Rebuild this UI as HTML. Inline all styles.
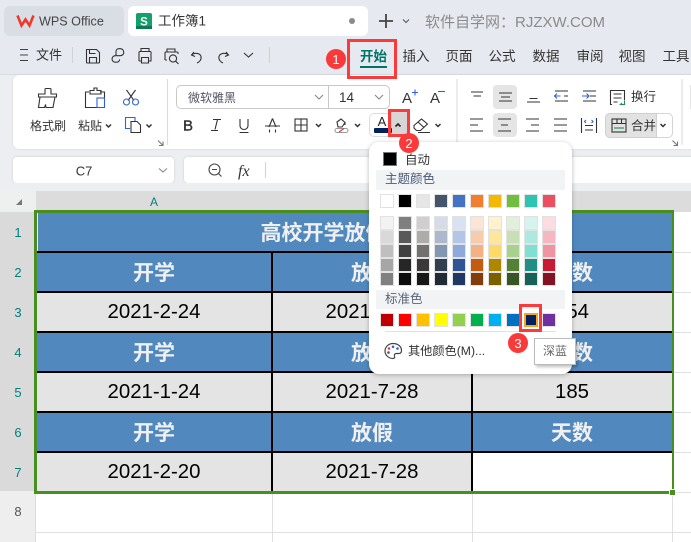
<!DOCTYPE html>
<html lang="zh"><head><meta charset="utf-8"><title>WPS</title>
<style>
html,body{margin:0;padding:0}
body{width:691px;height:542px;overflow:hidden;position:relative;background:#fff;font-family:"Liberation Sans","Noto Sans CJK SC",sans-serif}
div{box-sizing:border-box}
.a{position:absolute}
svg{position:absolute;left:0;top:0;overflow:visible}
svg text{font-family:"Liberation Sans","Noto Sans CJK SC",sans-serif}
.c{position:absolute;display:flex;align-items:center;justify-content:center;color:#000;font-size:20.400px;background:#e4e4e4;height:40px}
.h{background:#5189bf;color:#f0f0f0;font-weight:bold;font-size:21px}
.rh{position:absolute;left:0;width:35px;height:40px;background:#dadada;color:#00807a;font-size:13px;padding-left:1px;display:flex;align-items:center;justify-content:center}
.ln{position:absolute;background:#000}
.g{position:absolute;background:#e0e0e0}
.grid{position:absolute;display:grid;grid-template-columns:repeat(10,14px);column-gap:4px}
.grid div{height:14px;border:1px solid #e2e2e2}
.red{position:absolute;border:3px solid #fb3b3b}
.num{position:absolute;width:20px;height:20px;border-radius:50%;background:#f93a3a;color:#fff;font-size:13px;display:flex;align-items:center;justify-content:center}
</style></head><body>

<!-- chrome background -->
<div class="a" style="left:0;top:0;width:691px;height:75px;background:#e6eaf0"></div>
<div class="a" style="left:0;top:75px;width:691px;height:116px;background:#eceef1"></div>
<div class="a" style="left:0;top:74px;width:691px;height:1px;background:#d9dce0"></div>
<div class="a" style="left:4px;top:6px;width:120px;height:30px;border-radius:6px;background:#d9dee5"></div>
<div class="a" style="left:128px;top:6px;width:240px;height:30px;border-radius:6px;background:#fff"></div>
<div class="a" style="left:13px;top:75px;width:690px;height:74px;border-radius:6px;background:#fff;box-shadow:0 0 2px #cfd2d6"></div>
<div class="a" style="left:13px;top:157px;width:161px;height:26px;border-radius:4px;background:#fff;box-shadow:0 0 2px #c8cbd0"></div>
<div class="a" style="left:184px;top:157px;width:520px;height:26px;border-radius:4px;background:#fff;box-shadow:0 0 2px #c8cbd0"></div>
<div class="a" style="left:493px;top:85px;width:24px;height:24px;border-radius:4px;background:#e5e5e5"></div>
<div class="a" style="left:493px;top:113px;width:24px;height:24px;border-radius:4px;background:#e5e5e5"></div>
<div class="a" style="left:605px;top:113px;width:68px;height:25px;border-radius:5px;border:1px solid #d5d5d5;background:#fff"></div>
<div class="a" style="left:605px;top:113px;width:52px;height:25px;border-radius:5px 0 0 5px;border:1px solid #cfcfcf;background:#e2e2e2"></div>
<div class="a" style="left:176px;top:85px;width:214px;height:24px;border-radius:5px;border:1px solid #c8c8c8;background:#fff"></div>
<div class="a" style="left:328px;top:85px;width:1px;height:24px;background:#c8c8c8"></div>
<div class="a" style="left:369px;top:113px;width:38px;height:24px;border-radius:5px;border:1px solid #ddd;background:#fff"></div>
<div class="a" style="left:390px;top:112px;width:17px;height:24px;background:#d6d6d6"></div>

<svg width="691" height="191" viewBox="0 0 691 191" fill="none" stroke="#333" stroke-width="1.100">
<!-- title row -->
<path d="M17.500 15.500l4 10 4-6 4 6 4-10" stroke="#ee3a2c" stroke-width="2.600"/>
<text x="39" y="25.500" font-size="12.600" fill="#444" stroke="none">WPS Office</text>
<rect x="136" y="13" width="16" height="16" rx="2" fill="#13a06a" stroke="none"/>
<rect x="136" y="26" width="16" height="3" fill="#0b7a50" stroke="none"/>
<text x="144" y="25.500" font-size="11.500" font-weight="bold" text-anchor="middle" fill="#fff" stroke="none">S</text>
<text x="158" y="25.500" font-size="13.500" fill="#333" stroke="none">工作簿1</text>
<circle cx="352" cy="21" r="3" fill="#8a8a8a" stroke="none"/>
<path d="M379 21h14M386 14v14" stroke="#444" stroke-width="1.800"/>
<path d="M403 19.500l3 3 3-3" stroke="#555"/>
<text x="425" y="27" font-size="15" fill="#8a8a8a" stroke="none">软件自学网：RJZXW.COM</text>

<!-- quick access -->
<path d="M20 49.500h8M20 55h8M20 60.500h8" stroke="#444"/>
<text x="36" y="59.500" font-size="13" fill="#333" stroke="none">文件</text>
<path d="M72.500 47v16M269.500 47v16" stroke="#cfd2d6"/>
<path d="M86.500 49.500h10l3 3v9.500a1 1 0 0 1-1 1h-11a1 1 0 0 1-1-1zM89.500 49.500v4h6M89.500 62.500v-5h7v5"/>
<path d="M116 55.500v-4a2.800 2.800 0 0 1 2.800-2.800h1.500a3.500 3.500 0 0 1 0 7h-5a2.800 2.800 0 0 0 0 6.500h1.500a2.800 2.800 0 0 0 2.800-2.800"/>
<path d="M141 52v-3.500h8V52M139 61v-8.500a1 1 0 0 1 1-1h10a1 1 0 0 1 1 1V61h-2.500M141.500 61H139M141.500 57.500h7V63h-7z"/>
<path d="M167 52v-3h8v3M165 60v-7a1 1 0 0 1 1-1h11a1 1 0 0 1 1 1v1M167 60h-2"/><circle cx="173" cy="58.500" r="3.600"/><path d="M175.800 61.300l2.700 2.700"/>
<path d="M194 52l-2.500 3 3.500 1.500M192 54.500c3-2 8-1.500 9 2 .7 3-1.500 5.500-4 6.500"/>
<path d="M226 52l2.500 3-3.500 1.500M228 54.500c-3-2-8-1.500-9 2-.7 3 1.500 5.500 4 6.500"/>
<path d="M244 53l4.500 4 4.500-4"/>

<!-- tabs -->
<g font-size="13.500" fill="#333" stroke="none" text-anchor="middle">
<text x="373.500" y="61" fill="#00736a" font-weight="bold">开始</text>
<text x="416" y="61">插入</text><text x="459" y="61">页面</text><text x="502" y="61">公式</text>
<text x="546" y="61">数据</text><text x="590" y="61">审阅</text><text x="632" y="61">视图</text><text x="676" y="61">工具</text>
</g>
<rect x="360" y="66" width="27" height="2" fill="#00736a" stroke="none"/>

<!-- clipboard group -->
<path d="M46 88.500h4a1 1 0 0 1 1 1v4.500h5.500v3H38.500v-3H45v-4.500a1 1 0 0 1 1-1zM40 97l-1.500 10.500h6l1-3 .5 3h7l2-10.500"/>
<path d="M89 92h-3.500v15.500h13M100 92h4.500v6M90 90.500h4V88h3v2.500h4V94H90z"/><rect x="97" y="98" width="7.500" height="9.500" stroke="#2f62d8"/>
<path d="M126.500 90l7.500 10.500M135.500 90l-7.500 10.500" stroke="#333"/><circle cx="126.500" cy="102" r="3" stroke="#2f62d8"/><circle cx="135.500" cy="102" r="3" stroke="#2f62d8"/>
<g font-size="12" fill="#333" stroke="none"><text x="30" y="130">格式刷</text><text x="78" y="130">粘贴</text></g>
<path d="M106 124.500l2.500 2.500 2.500-2.500M146.500 124.500l2.500 2.500 2.500-2.500" stroke-width="1.500"/>
<path d="M130 128.500h-4.500v-11H135v4" stroke="#2f62d8"/><path d="M131 121.500h6l3.500 3.500v7.500H131z"/>
<path d="M158 140.500l5 5M163 141.500v4h-4" stroke="#777"/>
<path d="M167.500 79v66M457 79v66M682 79v66" stroke="#dcdcdc"/>
<rect x="690" y="85" width="5" height="24" fill="#e5e5e5" stroke="none"/>

<!-- font -->
<text x="188" y="102" font-size="12" fill="#556" stroke="none">微软雅黑</text>
<path d="M315 95l4 4 4-4M375 95l4 4 4-4" stroke="#888"/>
<text x="339" y="102" font-size="13.500" fill="#333" stroke="none">14</text>
<text x="402" y="103" font-size="15" fill="#333" stroke="none">A</text>
<path d="M412 92.500h6M415 89.500v6" stroke="#2f62d8"/>
<text x="430" y="103" font-size="15" fill="#333" stroke="none">A</text>
<path d="M438 91.500h7" stroke="#2f62d8"/>
<text x="188" y="130.500" font-size="15" text-anchor="middle" fill="#333" stroke="#333" stroke-width=".4">B</text>
<path d="M213 119.500h8M217.500 119.500l-2.500 10M211 130.500h7"/>
<path d="M240 119v6.500a4 4 0 0 0 8 0V119M239.500 132.500h9"/>
<path d="M272.500 118.500l-3.500 8.500M272.500 118.500l3.500 8.500M265 126h15M269.500 129.500v3M275.500 129.500v3"/>
<rect x="295" y="119" width="12" height="12"/><path d="M301 119v12M295 125h12"/>
<path d="M316 124l2.500 2.500 2.500-2.500M355 124l2.500 2.500 2.500-2.500" stroke-width="1.500"/>
<path d="M337 122l4-3 4 3.500-3 4.500h-4zM345 122v3"/><rect x="335" y="128.500" width="13" height="4" rx="2" stroke="#999"/><path d="M339 132l5-3.500" stroke="#e33"/>

<!-- font colour -->
<text x="382" y="126" font-size="13" text-anchor="middle" fill="#222" stroke="none">A</text>
<rect x="374" y="128" width="18" height="5" rx="1" fill="#002060" stroke="none"/>
<path d="M395.500 126.500l2.500-2.500 2.500 2.500" stroke-width="1.600" stroke="#222"/>
<path d="M414 125.500l7.500-6.500 6 5-7 6.500h-4l-2.500-2.500zM418 122l6 5.500M418 132.500h12"/>
<path d="M435.500 124l2.500 2.500 2.500-2.500" stroke-width="1.500"/>

<!-- align -->
<g stroke="#333">
<path d="M471 92h12M473.500 96h7.500"/>
<path d="M499 93h13M501 97h9M499 101h13"/>
<path d="M527 102h13M529.500 98.500h8" />
<path d="M555 91h13M564 96h4M555 101h13"/>
<path d="M583 91h13M590 96h6M583 101h13"/>
<path d="M470 119h13M470 125h8M470 131h13"/>
<path d="M498 119h13M501 125h7M498 131h13"/>
<path d="M526 119h13M531 125h8M526 131h13"/>
<path d="M554 119h13M554 125h13M554 131h13"/>
<path d="M581.500 118v15M596.500 118v15M585 125.500h8M585 130h8"/>
</g>
<path d="M554.500 96h6M557 93.500L554.500 96l2.500 2.500M582 96h7M586.500 93.500L589 96l-2.500 2.500M586 120l-1.500 1.500 1.500 1.500M591.500 120l1.500 1.500-1.500 1.500" stroke="#2f62d8"/>
<path d="M612 104.500h-1.500v-14h14v10M613.500 94h8M613.500 98h8M613.500 102h4"/>
<path d="M624.500 101v3.500h-4l1.500-1.500" stroke="#1a8a5a"/>
<text x="631" y="101" font-size="12.500" fill="#333" stroke="none">换行</text>
<rect x="612" y="119" width="14" height="13"/><path d="M612 123.500h14M617 119v4.500M621.500 119v4.500"/><path d="M614 128h10" stroke="#1a8a5a"/>
<text x="631" y="130" font-size="12.500" fill="#333" stroke="none">合并</text>
<path d="M660.500 124l2.500 2.500 2.500-2.500" stroke-width="1.500"/>
<path d="M672.500 140.500l5 5M677.500 141.500v4h-4" stroke="#777"/>

<!-- formula bar -->
<text x="84" y="175.500" font-size="13" text-anchor="middle" fill="#333" stroke="none">C7</text>
<path d="M159 168.500l4 3.500 4-3.500" stroke="#888"/>
<circle cx="214.500" cy="169.500" r="5.500" stroke="#444"/><path d="M212 169.500h5M218.500 173.500l3 3" stroke="#444"/>
<text x="238" y="176" font-size="16" font-style="italic" fill="#333" stroke="none" style="font-family:'Liberation Serif',serif">fx</text>
<path d="M265.500 162v16" stroke="#d5d5d5"/>
</svg>

<!-- sheet -->
<div class="a" style="left:0;top:183px;width:691px;height:8px;background:#eceef0"></div>
<div class="a" style="left:0;top:191px;width:36px;height:21px;background:#eef0f0"></div>
<div class="a" style="left:16px;top:199px;width:0;height:0;border-left:6px solid transparent;border-bottom:6px solid #777"></div>
<div class="a" style="left:36px;top:191px;width:655px;height:21px;background:#dcdcdc"></div>
<div class="a" style="left:36px;top:191px;width:236px;height:21px;display:flex;align-items:center;justify-content:center;color:#00807a;font-size:12px">A</div>

<div class="rh" style="top:212px">1</div><div class="rh" style="top:252px">2</div><div class="rh" style="top:292px">3</div><div class="rh" style="top:332px">4</div><div class="rh" style="top:372px">5</div><div class="rh" style="top:412px">6</div><div class="rh" style="top:452px">7</div>
<div class="rh" style="top:491px;background:#eee;color:#555;height:40px">8</div>
<div class="a" style="left:0;top:531px;width:35px;height:11px;background:#eee"></div>
<div class="a" style="left:35px;top:493px;width:1px;height:49px;background:#ddd"></div>

<div class="c h" style="left:38px;top:212px;width:634px;font-size:21px">高校开学放假天数表</div>
<div class="c h" style="left:36px;top:252px;width:236px">开学</div><div class="c h" style="left:272px;top:252px;width:200px">放假</div><div class="c h" style="left:472px;top:252px;width:200px">天数</div>
<div class="c" style="left:36px;top:292px;width:236px">2021-2-24</div><div class="c" style="left:272px;top:292px;width:200px">2021-7-28</div><div class="c" style="left:472px;top:292px;width:200px">154</div>
<div class="c h" style="left:36px;top:332px;width:236px">开学</div><div class="c h" style="left:272px;top:332px;width:200px">放假</div><div class="c h" style="left:472px;top:332px;width:200px">天数</div>
<div class="c" style="left:36px;top:372px;width:236px">2021-1-24</div><div class="c" style="left:272px;top:372px;width:200px">2021-7-28</div><div class="c" style="left:472px;top:372px;width:200px">185</div>
<div class="c h" style="left:36px;top:412px;width:236px">开学</div><div class="c h" style="left:272px;top:412px;width:200px">放假</div><div class="c h" style="left:472px;top:412px;width:200px">天数</div>
<div class="c" style="left:36px;top:452px;width:236px">2021-2-20</div><div class="c" style="left:272px;top:452px;width:200px">2021-7-28</div><div class="c" style="left:472px;top:452px;width:200px;background:#fff"></div>

<div class="ln" style="left:36px;top:251px;width:636px;height:2px"></div>
<div class="ln" style="left:36px;top:291px;width:636px;height:2px"></div>
<div class="ln" style="left:36px;top:331px;width:636px;height:2px"></div>
<div class="ln" style="left:36px;top:371px;width:636px;height:2px"></div>
<div class="ln" style="left:36px;top:411px;width:636px;height:2px"></div>
<div class="ln" style="left:36px;top:451px;width:636px;height:2px"></div>
<div class="ln" style="left:271px;top:252px;width:2px;height:240px"></div>
<div class="ln" style="left:471px;top:252px;width:2px;height:240px"></div>

<div class="g" style="left:36px;top:532px;width:655px;height:1px"></div>
<div class="g" style="left:272px;top:494px;width:1px;height:48px"></div>
<div class="g" style="left:472px;top:494px;width:1px;height:48px"></div>
<div class="g" style="left:672px;top:494px;width:1px;height:48px"></div>
<div class="g" style="left:674px;top:252px;width:17px;height:1px"></div>
<div class="g" style="left:674px;top:292px;width:17px;height:1px"></div>
<div class="g" style="left:674px;top:332px;width:17px;height:1px"></div>
<div class="g" style="left:674px;top:372px;width:17px;height:1px"></div>
<div class="g" style="left:674px;top:412px;width:17px;height:1px"></div>
<div class="g" style="left:674px;top:452px;width:17px;height:1px"></div>
<div class="g" style="left:674px;top:492px;width:17px;height:1px"></div>

<!-- selection -->
<div class="a" style="left:34px;top:210px;width:640px;height:284px;border:3px solid #47901f;border-right-width:2.500px"></div>
<div class="a" style="left:669px;top:489px;width:7px;height:7px;background:#47901f;border:1px solid #fff"></div>

<!-- colour popup -->
<div class="a" style="left:369px;top:142px;width:203px;height:232px;background:#fff;border-radius:10px;box-shadow:0 1px 5px rgba(0,0,0,.28)"></div>
<div class="a" style="left:383px;top:152px;width:14px;height:14px;background:#000;border:1px solid #777"></div>
<div class="a" style="left:405px;top:152px;font-size:12.500px;line-height:17px;color:#333">自动</div>
<div class="a" style="left:376px;top:170px;width:189px;height:20px;background:#f2f3f5;padding-left:9px;font-size:12.500px;line-height:19px;color:#4a5a78">主题颜色</div>

<div class="grid" style="left:380px;top:194px">
<div style="background:#fff"></div><div style="background:#000"></div><div style="background:#e7e6e6"></div><div style="background:#44546a"></div><div style="background:#4472c4"></div><div style="background:#f08030"></div><div style="background:#f4b800"></div><div style="background:#70bd3f"></div><div style="background:#2ec4b0"></div><div style="background:#eb5062"></div>
</div>
<div class="grid" style="left:380px;top:216px">
<div style="background:#f2f2f2"></div><div style="background:#7f7f7f"></div><div style="background:#d0cece"></div><div style="background:#d6dce5"></div><div style="background:#d9e2f3"></div><div style="background:#fce4d6"></div><div style="background:#fff2cc"></div><div style="background:#e2efda"></div><div style="background:#d5f3ef"></div><div style="background:#fadce2"></div>
<div style="background:#d9d9d9"></div><div style="background:#595959"></div><div style="background:#aeabab"></div><div style="background:#adb9ca"></div><div style="background:#b4c6e7"></div><div style="background:#f8cbad"></div><div style="background:#ffe699"></div><div style="background:#c6e0b4"></div><div style="background:#abe9e1"></div><div style="background:#f5b8c2"></div>
<div style="background:#bfbfbf"></div><div style="background:#404040"></div><div style="background:#757070"></div><div style="background:#8497b0"></div><div style="background:#8eaadb"></div><div style="background:#f4b183"></div><div style="background:#ffd966"></div><div style="background:#a9d18e"></div><div style="background:#80ded3"></div><div style="background:#f094a4"></div>
<div style="background:#a6a6a6"></div><div style="background:#262626"></div><div style="background:#3a3838"></div><div style="background:#323f4f"></div><div style="background:#2f5597"></div><div style="background:#c55a11"></div><div style="background:#ae8600"></div><div style="background:#548235"></div><div style="background:#218f84"></div><div style="background:#c81b33"></div>
<div style="background:#808080"></div><div style="background:#0d0d0d"></div><div style="background:#171717"></div><div style="background:#222a35"></div><div style="background:#1f3864"></div><div style="background:#843c0c"></div><div style="background:#7b6000"></div><div style="background:#375623"></div><div style="background:#166158"></div><div style="background:#851224"></div>
</div>

<div class="a" style="left:376px;top:290px;width:189px;height:19px;background:#f2f3f5;padding-left:9px;font-size:12.500px;line-height:18px;color:#5a6578">标准色</div>
<div class="grid" style="left:380px;top:313px">
<div style="background:#c00000"></div><div style="background:#ff0000"></div><div style="background:#ffc000"></div><div style="background:#ffff00"></div><div style="background:#92d050"></div><div style="background:#00b050"></div><div style="background:#00b0f0"></div><div style="background:#0070c0"></div><div style="background:#002060;border:2px solid #f5a623"></div><div style="background:#7030a0"></div>
</div>
<div class="a" style="left:385px;top:331px;width:171px;height:1px;background:#e2e2e2"></div>
<svg width="691" height="542" viewBox="0 0 691 542" fill="none">
<path d="M393 343.500c-4.500 0-8 3.500-8 7.500s3.500 7.500 8 7.500c1.500 0 2-1 1.500-2.200-.7-1.500.3-2.800 2-2.800h2.500c1.800 0 2.500-1.200 2.500-3 0-4-3.500-7-8.500-7z" stroke="#444" stroke-width="1.200"/>
<circle cx="389" cy="348.500" r="1.300" fill="#e33"/><circle cx="393" cy="346.800" r="1.300" fill="#2f62d8"/><circle cx="397.500" cy="348.500" r="1.300" fill="#2f62d8"/><circle cx="388.500" cy="352.500" r="1.300" fill="#555"/>
</svg>
<div class="a" style="left:408px;top:342px;font-size:12.200px;line-height:18px;color:#333;white-space:nowrap">其他颜色(M)...</div>

<!-- tooltip -->
<div class="a" style="left:534px;top:338px;width:42px;height:27px;background:#fff;border:1px solid #bbb;box-shadow:2px 2px 3px rgba(0,0,0,.25);font-size:12px;line-height:25px;text-align:center;color:#666">深蓝</div>

<!-- annotations -->
<div class="red" style="left:347px;top:39px;width:50px;height:40px"></div>
<div class="red" style="left:388px;top:109px;width:22px;height:28px"></div>
<div class="red" style="left:519px;top:304px;width:23px;height:28px"></div>
<div class="num" style="left:326px;top:49px">1</div>
<div class="num" style="left:399px;top:133px">2</div>
<div class="num" style="left:508px;top:333px">3</div>
</body></html>
